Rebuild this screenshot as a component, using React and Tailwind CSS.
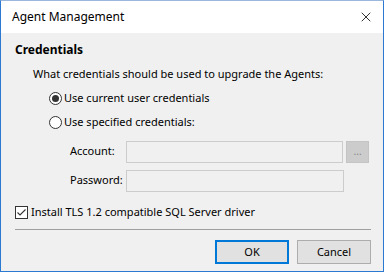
import { X } from "lucide-react";

const Radio = ({ checked, label }) => (
  <label className="flex items-center gap-[2px] h-[18px]">
    <span className="w-[13px] h-[13px] rounded-full border border-[#333] bg-white flex items-center justify-center">
      {checked && <span className="w-[7px] h-[7px] rounded-full bg-[#333]" />}
    </span>
    <span>{label}</span>
  </label>
);

const Field = ({ label, children }) => (
  <div className="flex items-center h-[23px]">
    <span className="w-[56px]">{label}</span>
    {children}
  </div>
);

const App = () => {
  return (
    <div className="w-[389px] h-[274px] bg-white text-[11px] text-black" style={{ fontFamily: '"Noto Sans", sans-serif' }}>
      <div className="w-[384px] h-[272px] border border-[#2b79d0] border-t-[#9ab8dd] bg-[#f0f0f0] flex flex-col">
        <div className="h-[32px] bg-white flex items-center justify-between pl-[11px] pr-[9px] text-[12px]">
          <span>Agent Management</span>
          <X size={16} strokeWidth={1.2} />
        </div>

        <div className="px-[14px] pt-[8px]">
          <div className="font-bold h-[18px] text-[12px]">Credentials</div>
          <div className="pl-[18px] mt-[7px] h-[18px]">What credentials should be used to upgrade the Agents:</div>

          <div className="pl-[34px] mt-[5px] flex flex-col gap-[6px]">
            <Radio checked label="Use current user credentials" />
            <Radio label="Use specified credentials:" />
          </div>

          <div className="pl-[55px] mt-[9px] flex flex-col gap-[6px]">
            <Field label="Account:">
              <div className="w-[218px] h-[22px] border border-[#cccccc] bg-[#f0f0f0]" />
              <div className="ml-[3px] w-[23px] h-[22px] bg-[#cccccc] border border-[#c4c4c4] text-[#888] text-[10px] flex items-center justify-center">...</div>
            </Field>
            <Field label="Password:">
              <div className="w-[218px] h-[22px] border border-[#cccccc] bg-[#f0f0f0]" />
            </Field>
          </div>

          <label className="flex items-center gap-[3px] mt-[11px] h-[18px]">
            <span className="w-[13px] h-[13px] border border-[#333] bg-white flex items-center justify-center">
              <svg width="11" height="11" viewBox="0 0 11 11">
                <path d="M1.5 5.5 L4 8 L9.5 2.5" fill="none" stroke="#333" strokeWidth="1.1" />
              </svg>
            </span>
            <span>Install TLS 1.2 compatible SQL Server driver</span>
          </label>

          <div className="mt-[8px] border-t border-[#a0a0a0] w-[356px]" />

          <div className="flex justify-end gap-[8px] mt-[10px] -mr-[2px]">
            <button className="w-[74px] h-[24px] bg-[#e1e1e1] border-2 border-[#0078d7]">OK</button>
            <button className="w-[74px] h-[24px] bg-[#e1e1e1] border border-[#adadad]">Cancel</button>
          </div>
        </div>
      </div>
    </div>
  );
};

export default App;
